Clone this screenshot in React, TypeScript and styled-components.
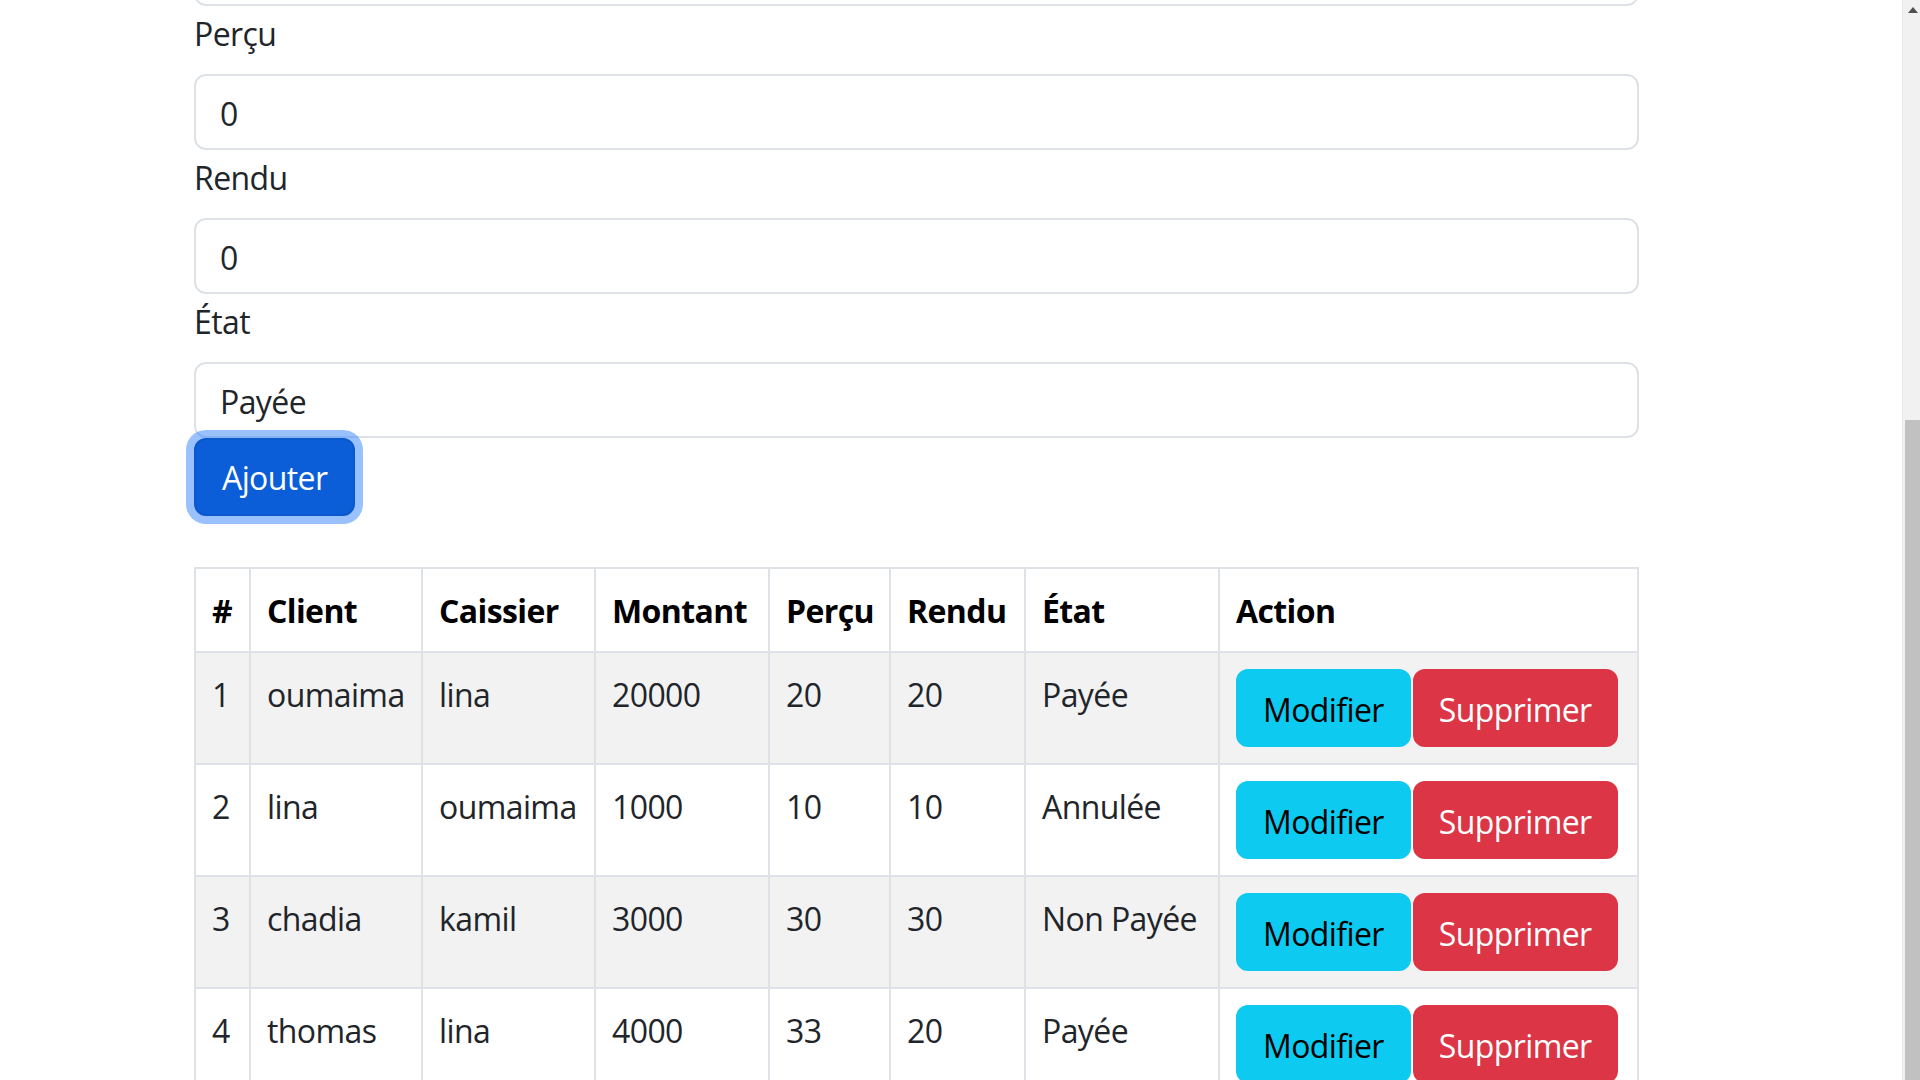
import React from "react";
import styled, { createGlobalStyle } from "styled-components";

const GlobalStyle = createGlobalStyle`
  html, body {
    margin: 0;
    padding: 0;
    overflow: hidden;
    background: #ffffff;
  }
  body {
    font-family: "Open Sans", "Noto Sans", "Liberation Sans", sans-serif;
    color: #212529;
    letter-spacing: -0.6px;
  }
  * { box-sizing: border-box; }
`;

const Screen = styled.div`
  display: flex;
  width: 100vw;
  height: 100vh;
  overflow: hidden;
`;

const Viewport = styled.div`
  flex: 1;
  overflow: hidden;
`;

const Page = styled.div`
  margin-top: -70px;
  padding-left: 194px;
  width: 1639px;
`;

const Field = styled.div`
  display: flex;
  flex-direction: column;
`;

const Label = styled.label`
  display: block;
  margin: 4px 0 16px;
  font-size: 32px;
  line-height: 48px;
  color: #212529;
`;

const Input = styled.input`
  display: block;
  width: 100%;
  height: 76px;
  padding: 13px 24px 11px;
  font-family: inherit;
  letter-spacing: inherit;
  font-size: 32px;
  line-height: 48px;
  color: #212529;
  background: #ffffff;
  border: 2px solid #dee2e6;
  border-radius: 12px;
  outline: none;
`;

const PrimaryButton = styled.button`
  display: inline-block;
  align-self: flex-start;
  height: 78px;
  padding: 2px 26px 0;
  font-family: inherit;
  letter-spacing: inherit;
  font-size: 32px;
  line-height: 48px;
  color: #ffffff;
  background: #0b5ed7;
  border: 2px solid #0a58ca;
  border-radius: 12px;
  box-shadow: 0 0 0 8px rgba(49, 132, 253, 0.5);
  cursor: pointer;
`;

const Table = styled.table`
  margin-top: 51px;
  width: 1445px;
  table-layout: fixed;
  border-collapse: collapse;
  font-size: 32px;
  line-height: 48px;
  color: #212529;
`;

const Col = styled.col<{ $w?: number }>`
  width: ${(p) => (p.$w ? `${p.$w}px` : "auto")};
`;

const HeadCell = styled.th`
  padding: 18px 16px 16px;
  text-align: left;
  vertical-align: top;
  font-weight: 700;
  color: #000000;
  border: 2px solid #dee2e6;
  white-space: nowrap;
`;

const Row = styled.tr<{ $striped: boolean }>`
  background: ${(p) => (p.$striped ? "#f2f2f2" : "#ffffff")};
`;

const Cell = styled.td`
  padding: 16px;
  vertical-align: top;
  border: 2px solid #dee2e6;
  white-space: nowrap;
`;

const CellText = styled.div`
  padding-top: 2px;
`;

const Actions = styled.div`
  display: flex;
  gap: 2px;
`;

const ActionButton = styled.button<{ $kind: "info" | "danger" }>`
  height: 78px;
  padding: 3px ${(p) => (p.$kind === "info" ? "25px" : "24px")} 0;
  font-family: inherit;
  letter-spacing: inherit;
  font-size: 32px;
  line-height: 48px;
  border-radius: 12px;
  border: 2px solid ${(p) => (p.$kind === "info" ? "#0dcaf0" : "#dc3545")};
  background: ${(p) => (p.$kind === "info" ? "#0dcaf0" : "#dc3545")};
  color: ${(p) => (p.$kind === "info" ? "#000000" : "#ffffff")};
  cursor: pointer;
`;

const Scrollbar = styled.div`
  width: 18px;
  flex: 0 0 18px;
  display: flex;
  flex-direction: column;
  background: #f1f1f1;
  border-left: 1px solid #e8e8e8;
`;

const ArrowBox = styled.div`
  height: 20px;
  display: flex;
  align-items: center;
  justify-content: center;
  padding-left: 2px;
`;

const TrackGap = styled.div`
  height: 400px;
`;

const Thumb = styled.div`
  flex: 1;
  margin-left: 2px;
  background: #c1c1c1;
`;

const rows = [
  { id: 1, client: "oumaima", caissier: "lina", montant: "20000", percu: "20", rendu: "20", etat: "Payée" },
  { id: 2, client: "lina", caissier: "oumaima", montant: "1000", percu: "10", rendu: "10", etat: "Annulée" },
  { id: 3, client: "chadia", caissier: "kamil", montant: "3000", percu: "30", rendu: "30", etat: "Non Payée" },
  { id: 4, client: "thomas", caissier: "lina", montant: "4000", percu: "33", rendu: "20", etat: "Payée" },
];

const colWidths = [55, 172, 173, 174, 121, 135, 194, 0];
const headers = ["#", "Client", "Caissier", "Montant", "Perçu", "Rendu", "État", "Action"];

export default function App() {
  return (
    <>
      <GlobalStyle />
      <Screen>
        <Viewport>
          <Page>
            <Field>
              <Input readOnly value="" aria-label="Montant" />
            </Field>
            <Field>
              <Label>Perçu</Label>
              <Input readOnly value="0" />
            </Field>
            <Field>
              <Label>Rendu</Label>
              <Input readOnly value="0" />
            </Field>
            <Field>
              <Label>État</Label>
              <Input readOnly value="Payée" />
            </Field>
            <PrimaryButton>Ajouter</PrimaryButton>
            <Table>
              <colgroup>
                {colWidths.map((w, i) => (
                  <Col key={i} $w={w || undefined} />
                ))}
              </colgroup>
              <thead>
                <tr>
                  {headers.map((h) => (
                    <HeadCell key={h}>{h}</HeadCell>
                  ))}
                </tr>
              </thead>
              <tbody>
                {rows.map((r, i) => (
                  <Row key={r.id} $striped={i % 2 === 0}>
                    <Cell><CellText>{r.id}</CellText></Cell>
                    <Cell><CellText>{r.client}</CellText></Cell>
                    <Cell><CellText>{r.caissier}</CellText></Cell>
                    <Cell><CellText>{r.montant}</CellText></Cell>
                    <Cell><CellText>{r.percu}</CellText></Cell>
                    <Cell><CellText>{r.rendu}</CellText></Cell>
                    <Cell><CellText>{r.etat}</CellText></Cell>
                    <Cell>
                      <Actions>
                        <ActionButton $kind="info">Modifier</ActionButton>
                        <ActionButton $kind="danger">Supprimer</ActionButton>
                      </Actions>
                    </Cell>
                  </Row>
                ))}
              </tbody>
            </Table>
          </Page>
        </Viewport>
        <Scrollbar>
          <ArrowBox>
            <svg width="10" height="6" viewBox="0 0 10 6">
              <path d="M0 6 L5 0 L10 6 Z" fill="#505050" />
            </svg>
          </ArrowBox>
          <TrackGap />
          <Thumb />
        </Scrollbar>
      </Screen>
    </>
  );
}
